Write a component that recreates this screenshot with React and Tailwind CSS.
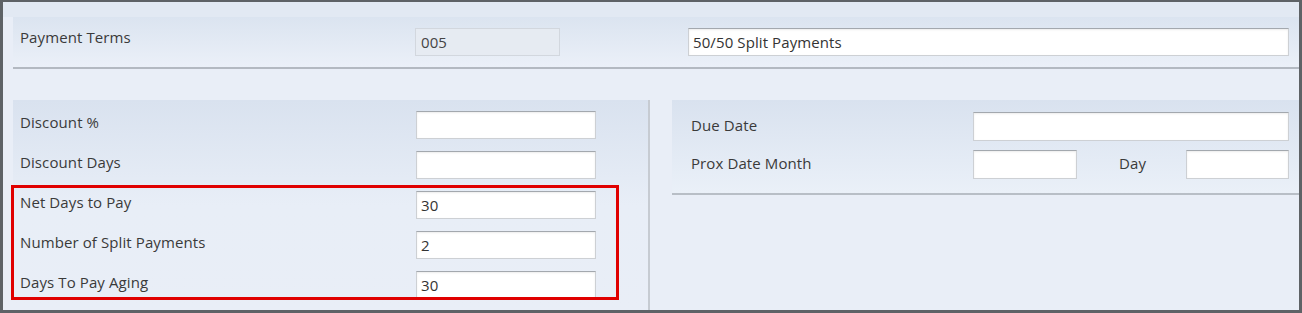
const font = { fontFamily: '"Open Sans", "Liberation Sans", Arial, sans-serif' };

function Field({ value, className = "" }) {
  return (
    <div
      className={`h-[28px] bg-white border border-[#cdd0d4] border-t-[#a3a8ae] shadow-[inset_0_1px_2px_rgba(0,0,0,0.08)] flex items-center px-[4px] text-[15px] text-[#333] ${className}`}
    >
      {value}
    </div>
  );
}

function Row({ label, value }) {
  return (
    <div className="flex items-center h-[28px]">
      <div className="w-[396px] text-[15px] text-[#3a3a3a] -mt-[6px]">{label}</div>
      <Field value={value} className="w-[180px]" />
    </div>
  );
}

export default function App() {
  return (
    <div
      style={font}
      className="relative w-[1302px] h-[313px] bg-[#e9eef7] border-[#5e6266] border-l-[3px] border-r-[3px] border-t-[2px] border-b-[3px] overflow-hidden tracking-[0.1px]"
    >
      {/* header strip */}
      <div className="h-[15px] bg-[#e2e9f3]" />
      <div className="ml-[10px] h-[50px] flex items-center pl-[7px] pr-[10px] bg-gradient-to-b from-[#dbe4f0] to-[#ebf0f8]">
        <div className="w-[395px] text-[15px] text-[#3a3a3a] -mt-[9px]">Payment Terms</div>
        <div className="w-[145px] h-[28px] bg-[#e6ebf2] border border-[#d2d7de] flex items-center px-[5px] text-[15px] text-[#444]">
          005
        </div>
        <Field value="50/50 Split Payments" className="ml-[128px] flex-1" />
      </div>
      <div className="ml-[10px] h-[2px] bg-[#b3b9c1]" />
      <div className="h-[31px]" />

      {/* lower panels */}
      <div className="flex h-[210px] pl-[10px]">
        <div className="w-[635px] pt-[11px] pl-[7px] flex flex-col gap-[12px] bg-gradient-to-b from-[#d9e2ef] via-[#e8eef7] to-[#e9eef7]">
          <Row label="Discount %" value="" />
          <Row label="Discount Days" value="" />
          <Row label="Net Days to Pay" value="30" />
          <Row label="Number of Split Payments" value="2" />
          <Row label="Days To Pay Aging" value="30" />
        </div>
        <div className="w-[2px] bg-[#c6cbd2]" />
        <div className="w-[22px]" />
        <div className="flex-1 flex flex-col">
          <div className="pt-[12px] pl-[19px] pr-[10px] pb-[14px] flex flex-col gap-[9px] bg-gradient-to-b from-[#d9e2ef] to-[#eaf0f8]">
            <div className="flex items-center h-[29px]">
              <div className="w-[282px] text-[15px] text-[#3a3a3a] -mt-[2px]">Due Date</div>
              <Field value="" className="flex-1 h-[29px]" />
            </div>
            <div className="flex items-center h-[29px]">
              <div className="w-[282px] text-[15px] text-[#3a3a3a] -mt-[2px]">Prox Date Month</div>
              <Field value="" className="w-[104px] h-[29px]" />
              <div className="w-[109px] pl-[42px] text-[15px] text-[#3a3a3a] -mt-[2px]">Day</div>
              <Field value="" className="flex-1 h-[29px]" />
            </div>
          </div>
          <div className="h-[2px] bg-[#b8bec6]" />
        </div>
      </div>

      {/* annotation */}
      <div className="absolute left-[8px] top-[183px] w-[608px] h-[115px] border-[3px] border-[#e00000] pointer-events-none" />
    </div>
  );
}
